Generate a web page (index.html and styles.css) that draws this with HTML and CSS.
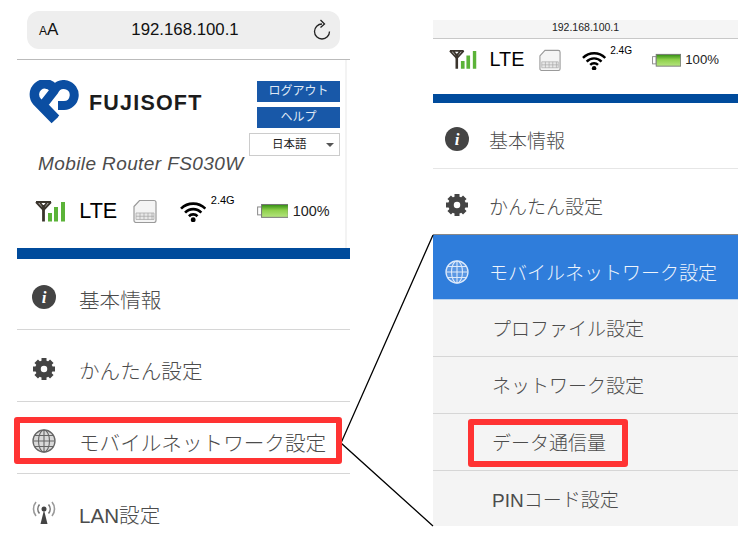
FILE: index.html
```html
<!DOCTYPE html>
<html lang="ja">
<head>
  <meta charset="UTF-8">
  <title>Mobile Router FS030W</title>
  <link rel="stylesheet" href="styles.css">
</head>
<body>
  <svg class="sprites" width="0" height="0">
    <symbol id="i-signal" viewBox="0 0 30 21">
      <path d="M1 1H16M1 1L8.500 9L16 1M4.500 1L8.500 6L12.500 1" fill="none" stroke="#3a342c" stroke-width="1.900"/>
      <path d="M8.500 4V20.500" stroke="#3a342c" stroke-width="2.800"/>
      <path d="M13 12h4v8.500h-4zM19 6h4v14.500h-4zM26 1h4v19.500h-4z" fill="#5bb338"/>
    </symbol>
    <symbol id="i-sim" viewBox="0 0 24 24">
      <path d="M1 7L6.500 1H21a2 2 0 0 1 2 2V21a2 2 0 0 1-2 2H3a2 2 0 0 1-2-2Z" fill="#f4f4f4" stroke="#9a9a9a" stroke-width="1.200"/>
      <path d="M3 13.500H21V20H3ZM3 16.800H21M7 13.500V20M11 13.500V20M15 13.500V20M19 13.500V20" fill="#e8e8e8" stroke="#a5a5a5" stroke-width=".7"/>
    </symbol>
    <symbol id="i-wifi" viewBox="0 0 26 22">
      <path d="M1 8.500A17 17 0 0 1 25 8.500M5 12.500A11 11 0 0 1 21 12.500M8.800 16A5.800 5.800 0 0 1 17.200 16" fill="none" stroke="#000" stroke-width="2.600"/>
      <circle cx="13" cy="19.500" r="2.400"/>
    </symbol>
    <symbol id="i-battery" viewBox="0 0 32 16">
      <defs>
        <linearGradient id="battery-fill" x1="0" y1="0" x2="0" y2="1">
          <stop offset="0" stop-color="#2f8a10"/>
          <stop offset=".45" stop-color="#8ed04c"/>
          <stop offset="1" stop-color="#b6e57e"/>
        </linearGradient>
      </defs>
      <rect x=".5" y="4" width="4" height="8" fill="#fff" stroke="#888"/>
      <rect x="4.500" y="1.500" width="27" height="13" fill="url(#battery-fill)" stroke="#777"/>
    </symbol>
    <symbol id="i-gear" viewBox="0 0 24 24">
      <circle cx="12" cy="12" r="6" fill="none" stroke="#444" stroke-width="5.500"/>
      <g stroke="#444" stroke-width="5">
        <path d="M12 1V5M12 19V23M1 12H5M19 12H23"/>
        <path d="M4.200 4.200L7 7M17 17L19.800 19.800M4.200 19.800L7 17M17 7L19.800 4.200"/>
      </g>
    </symbol>
    <symbol id="i-globe" viewBox="0 0 24 24">
      <circle cx="12" cy="12" r="11" fill="currentColor" fill-opacity=".25" stroke="currentColor" stroke-width="1.300"/>
      <path d="M12 1V23M1 12H23M2.500 6.500H21.500M2.500 17.500H21.500" fill="none" stroke="currentColor" stroke-width="1.100"/>
      <ellipse cx="12" cy="12" rx="5.500" ry="11" fill="none" stroke="currentColor" stroke-width="1.100"/>
    </symbol>
    <symbol id="i-lan" viewBox="0 0 24 24">
      <circle cx="12" cy="8" r="2.500" fill="#444"/>
      <path d="M12 9L8.500 23H15.500Z" fill="#444"/>
      <path d="M7.500 3.500A7 7 0 0 0 7.500 12.500M16.500 3.500A7 7 0 0 1 16.500 12.500" fill="none" stroke="#777" stroke-width="1.600"/>
      <path d="M4 1A11 11 0 0 0 4 15M20 1A11 11 0 0 1 20 15" fill="none" stroke="#999" stroke-width="1.600"/>
    </symbol>
  </svg>

  <main class="figure">
    <section class="phone">
      <div class="browser">
        <div class="address">
          <span class="aa"><small>A</small>A</span>
          <span class="url">192.168.100.1</span>
          <svg class="reload" viewBox="0 0 18 22">
            <path d="M9 5A7.500 7.500 0 1 0 16.500 12.500" fill="none" stroke="#222" stroke-width="1.300"/>
            <path d="M7.500 1L11.500 5L7.500 8.500" fill="none" stroke="#222" stroke-width="1.300"/>
          </svg>
        </div>
      </div>

      <header class="router-head">
        <div class="head-top">
          <div class="brand-col">
            <div class="brand">
              <svg class="logo" viewBox="0 0 50 46">
                <path d="M24 7.500A10.500 10.500 0 0 0 8 21.500L26 40" fill="none" stroke="#0b4ea2" stroke-width="9.500"/>
                <path d="M27 38.500L14 25L25 11A10.500 10.500 0 1 1 35 25.500H29" fill="none" stroke="#0b4ea2" stroke-width="9"/>
              </svg>
              <span class="brand-name">FUJISOFT</span>
            </div>
            <p class="model">Mobile Router FS030W</p>
          </div>
          <div class="actions">
            <a class="btn">ログアウト</a>
            <a class="btn">ヘルプ</a>
            <div class="lang">日本語<i class="caret"></i></div>
          </div>
        </div>
        <div class="status status-main">
          <svg class="st-signal"><use href="#i-signal"/></svg>
          <span class="st-lte">LTE</span>
          <svg class="st-sim"><use href="#i-sim"/></svg>
          <svg class="st-wifi"><use href="#i-wifi"/></svg>
          <span class="st-band">2.4G</span>
          <svg class="st-battery"><use href="#i-battery"/></svg>
          <span class="st-pct">100%</span>
        </div>
      </header>
      <div class="band band-main"></div>

      <ul class="menu menu-main">
        <li class="item"><span class="ico info">i</span>基本情報</li>
        <li class="item"><svg class="ico"><use href="#i-gear"/></svg>かんたん設定</li>
        <li class="item"><svg class="ico globe"><use href="#i-globe"/></svg>モバイルネットワーク設定</li>
        <li class="item"><svg class="ico"><use href="#i-lan"/></svg>LAN設定</li>
      </ul>
    </section>

    <section class="detail">
      <div class="mini-url">192.168.100.1</div>
      <div class="status status-detail">
        <svg class="st-signal"><use href="#i-signal"/></svg>
        <span class="st-lte">LTE</span>
        <svg class="st-sim"><use href="#i-sim"/></svg>
        <svg class="st-wifi"><use href="#i-wifi"/></svg>
        <span class="st-band">2.4G</span>
        <svg class="st-battery"><use href="#i-battery"/></svg>
        <span class="st-pct">100%</span>
      </div>
      <div class="band band-detail"></div>

      <ul class="menu menu-detail">
        <li class="item"><span class="ico info">i</span>基本情報</li>
        <li class="item"><svg class="ico"><use href="#i-gear"/></svg>かんたん設定</li>
        <li class="item active"><svg class="ico globe"><use href="#i-globe"/></svg>モバイルネットワーク設定</li>
      </ul>
      <ul class="submenu">
        <li>プロファイル設定</li>
        <li>ネットワーク設定</li>
        <li>データ通信量</li>
        <li>PINコード設定</li>
      </ul>
    </section>

    <svg class="callout-lines" viewBox="0 0 753 536">
      <path d="M433 235L341 443L433 526" fill="none" stroke="#000" stroke-width="1.300"/>
    </svg>
    <div class="mark mark-left"></div>
    <div class="mark mark-right"></div>
  </main>
</body>
</html>
```

FILE: styles.css
```css
* {
  box-sizing: border-box;
}

body {
  margin: 0;
  background: #fff;
  font-family: "Liberation Sans", "Noto Sans CJK JP", sans-serif;
  color: #4c4c4c;
}

ul {
  list-style: none;
  margin: 0;
  padding: 0;
}

.sprites {
  display: block;
  position: absolute;
}

.figure {
  position: relative;
  display: flex;
  width: 753px;
  height: 536px;
  overflow: hidden;
  padding-left: 17px;
}

.phone {
  width: 333px;
  flex: none;
}

.detail {
  width: 305px;
  height: 526px;
  margin-left: 83px;
  flex: none;
  overflow: hidden;
  padding-top: 20px;
}

/* browser bar */
.browser {
  padding: 11px 10px 10px;
  border-bottom: 1px solid #bbb;
}

.address {
  display: grid;
  grid-template-columns: 1fr auto 1fr;
  align-items: center;
  height: 38px;
  padding: 0 9px 0 12px;
  border-radius: 12px;
  background: #eee;
  color: #111;
}

.aa {
  font-size: 17px;
}

.aa small {
  font-size: 12px;
}

.url {
  font-size: 16.800px;
}

.reload {
  width: 18px;
  height: 22px;
  justify-self: end;
}

.mini-url {
  height: 19px;
  border-bottom: 1px solid #c8c8c8;
  background: #f5f5f5;
  color: #222;
  font-size: 10.500px;
  line-height: 15px;
  text-align: center;
}

/* router header */
.router-head {
  width: 330px;
  height: 188px;
  padding: 20px 5px 0 12px;
  border-right: 2px solid #f3f3f3;
}

.head-top {
  display: flex;
  justify-content: space-between;
}

.brand {
  display: flex;
  align-items: center;
  height: 46px;
  gap: 10px;
}

.logo {
  width: 50px;
  height: 46px;
}

.brand-name {
  font-size: 21.500px;
  font-weight: bold;
  letter-spacing: 1.200px;
  color: #1c1c1c;
}

.model {
  margin: 27px 0 0 9px;
  font-size: 19px;
  font-style: italic;
  letter-spacing: .4px;
  white-space: nowrap;
}

.actions {
  display: flex;
  flex-direction: column;
  align-items: flex-end;
  gap: 5px;
  padding-top: 1px;
}

.btn {
  width: 83px;
  height: 21px;
  background: #1858a8;
  color: #dfe8f5;
  font-size: 12px;
  line-height: 20px;
  text-align: center;
}

.lang {
  position: relative;
  width: 91px;
  height: 23px;
  border: 1px solid #ccc;
  color: #222;
  font-size: 11.500px;
  line-height: 21px;
  padding-left: 22px;
}

.caret {
  position: absolute;
  right: 5px;
  top: 9px;
  border: 4px solid transparent;
  border-top: 4px solid #555;
}

/* status row, sized in em so both panels share it */
.status {
  display: flex;
  align-items: center;
  height: 1em;
  color: #000;
}

.status-main {
  font-size: 24px;
  margin: 24px 0 0 6px;
}

.status-detail {
  font-size: 22px;
  margin: 10px 0 23px 16px;
}

.st-signal {
  width: 1.250em;
  height: .875em;
}

.st-lte {
  margin-left: .66em;
  width: 1.720em;
  font-size: .9em;
  line-height: 1;
}

.st-sim {
  width: 1em;
  height: 1.040em;
  margin-left: .7em;
}

.st-wifi {
  width: 1.100em;
  height: .93em;
  margin-left: .95em;
}

.st-band {
  align-self: flex-start;
  width: 2.300em;
  margin: -.42em 0 0 .4em;
  font-size: .46em;
  line-height: 1.200;
}

.st-battery {
  width: 1.330em;
  height: .66em;
  margin-left: .85em;
}

.st-pct {
  margin-left: .3em;
  font-size: .6em;
  line-height: 1;
  color: #222;
}

.band {
  background: #004b9c;
}

.band-main {
  height: 11px;
}

.band-detail {
  height: 9px;
}

/* menus */
.item {
  display: flex;
  align-items: center;
  font-weight: 300;
  white-space: nowrap;
}

.ico {
  flex: none;
}

.info {
  display: flex;
  justify-content: center;
  align-items: center;
  border-radius: 50%;
  background: #444;
  color: #fff;
  font-family: "Liberation Serif", serif;
  font-style: italic;
  font-weight: bold;
  font-size: 17px;
  line-height: 1;
}

.globe {
  color: #666;
}

.menu-main {
  font-size: 20.600px;
}

.menu-main .item {
  height: 72px;
  padding: 9px 0 0 15px;
  border-bottom: 1px solid #d6d6d6;
}

.menu-main .item:first-child {
  height: 71px;
}

.menu-main .ico {
  width: 24px;
  height: 24px;
  margin: 0 23px 3px 0;
}

.menu-detail {
  font-size: 19px;
}

.menu-detail .item {
  height: 66px;
  padding: 7px 0 0 12px;
  border-bottom: 1px solid #e6e6e6;
}

.menu-detail .ico {
  width: 24px;
  height: 24px;
  margin-right: 20px;
}

.menu-detail .item.active {
  margin-top: -1px;
  padding-top: 9px;
  border-top: 1px solid #888;
  border-bottom: 1px solid #bcd4ee;
  background: #2f7ddb;
  color: #eef4fc;
}

.active .globe {
  color: #dce9fa;
}

.submenu {
  background: #f4f4f4;
  font-size: 19px;
  font-weight: 300;
}

.submenu li {
  display: flex;
  align-items: center;
  height: 57px;
  padding: 0 0 2px 59px;
  box-shadow: inset 0 -1px 0 #d6d6d6;
}

.submenu li:last-child {
  box-shadow: none;
}

/* annotations on top of the screenshots */
.callout-lines {
  position: absolute;
  left: 0;
  top: 0;
  width: 753px;
  height: 536px;
}

.mark {
  position: absolute;
  border: 6px solid #ff3333;
  border-radius: 3px;
}

.mark-left {
  left: 14px;
  top: 417px;
  width: 328px;
  height: 47px;
}

.mark-right {
  left: 468px;
  top: 419px;
  width: 160px;
  height: 48px;
}
```
